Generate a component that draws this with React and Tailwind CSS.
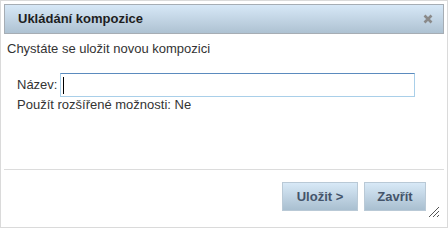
import React from 'react'

const font = { fontFamily: '"Liberation Sans", Arial, sans-serif' }

function CloseIcon() {
  return (
    <svg width="10" height="10" viewBox="0 0 10 10" className="block">
      <path d="M1.5 1.5 L8.5 8.5 M8.5 1.5 L1.5 8.5" stroke="#8a8a8a" strokeWidth="2.6" strokeLinecap="butt" />
    </svg>
  )
}

function ResizeGrip() {
  return (
    <svg width="12" height="12" viewBox="0 0 12 12" className="absolute right-[7px] bottom-[9px]">
      <path d="M11 1 L1 11 M11 5 L5 11 M11 9 L9 11" stroke="#555" strokeWidth="1" />
    </svg>
  )
}

function DialogButton({ className, children }) {
  return (
    <button
      type="button"
      className={`h-[29px] border border-[#b9c9d6] bg-gradient-to-b from-[#d8e9f7] to-[#a9bfd0] text-[13px] font-bold text-[#44546a] ${className}`}
    >
      {children}
    </button>
  )
}

export default function App() {
  return (
    <div style={font} className="relative flex h-[228px] w-[448px] flex-col border border-[#dadada] bg-white p-[3px] text-[13px] text-[#333]">
      <div className="flex h-[30px] shrink-0 items-center justify-between border border-[#a6adb4] bg-gradient-to-b from-[#d7e8f7] to-[#aec2d2] pl-[13px] pr-[10px]">
        <span className="font-bold text-[#1e1e1e]">Ukládání kompozice</span>
        <CloseIcon />
      </div>

      <div className="flex-1 pl-[3px]">
        <div className="mt-[7px] leading-4">Chystáte se uložit novou kompozici</div>
        <div className="mt-[16px] pl-[10px]">
          <div className="flex items-center">
            <label className="leading-4">Název:</label>
            <div className="ml-[3px] flex h-[24px] w-[355px] items-center border border-[#a9cfe9] border-t-[#5b8bbe] bg-white">
              <span className="ml-[2px] h-[17px] w-[1px] bg-black" />
            </div>
          </div>
          <div className="leading-4">Použít rozšířené možnosti: Ne</div>
        </div>
      </div>

      <div className="flex h-[55px] shrink-0 justify-end gap-[6px] border-t border-[#dcdcdc] pr-[18px] pt-[12px]">
        <DialogButton className="w-[76px]">Uložit &gt;</DialogButton>
        <DialogButton className="w-[62px]">Zavřít</DialogButton>
      </div>
      <ResizeGrip />
    </div>
  )
}
